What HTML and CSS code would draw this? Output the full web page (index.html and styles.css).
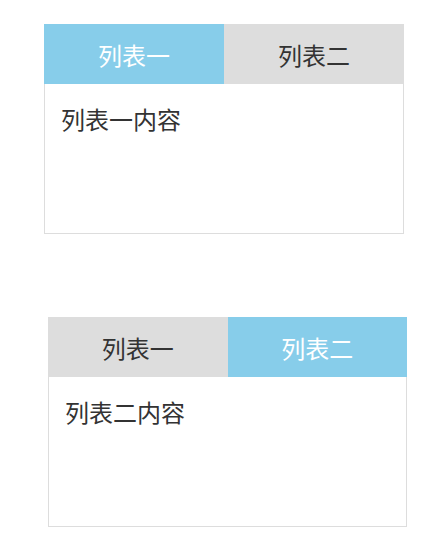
FILE: index.html
```html
<!DOCTYPE html>
<html lang="zh-CN">
<head>
  <meta charset="UTF-8">
  <meta name="viewport" content="width=device-width, initial-scale=1.0">
  <title>选项卡</title>
  <link rel="stylesheet" href="styles.css">
</head>
<body>
  <div class="tab-box" id="tabA">
    <div class="tab-head">
      <div class="tab active" data-index="0">列表一</div>
      <div class="tab" data-index="1">列表二</div>
    </div>
    <div class="tab-body">
      <div class="panel show">列表一内容</div>
      <div class="panel">列表二内容</div>
    </div>
  </div>

  <div class="tab-box second" id="tabB">
    <div class="tab-head">
      <div class="tab" data-index="0">列表一</div>
      <div class="tab active" data-index="1">列表二</div>
    </div>
    <div class="tab-body">
      <div class="panel">列表一内容</div>
      <div class="panel show">列表二内容</div>
    </div>
  </div>

  <script>
    // 点击切换选项卡
    document.querySelectorAll('.tab-box').forEach(function (box) {
      var tabs = box.querySelectorAll('.tab');
      var panels = box.querySelectorAll('.panel');
      tabs.forEach(function (tab) {
        tab.addEventListener('click', function () {
          var i = Number(tab.dataset.index);
          tabs.forEach(function (t) { t.classList.remove('active'); });
          panels.forEach(function (p) { p.classList.remove('show'); });
          tab.classList.add('active');
          panels[i].classList.add('show');
        });
      });
    });
  </script>
</body>
</html>
```
FILE: styles.css
```css
body {
  margin: 0;
  padding-top: 24px;
  font-family: "Microsoft YaHei", "Noto Sans CJK SC", sans-serif;
  background-color: #ffffff;
  color: #333333;
}
.tab-box {
  width: 360px;
  margin-left: 44px;
}
.tab-box.second {
  margin-top: 83px;
  margin-left: 48px;
  width: 359px;
}
.tab-head {
  display: flex;
  height: 60px;
}
.tab {
  flex: 1;
  display: flex;
  align-items: center;
  justify-content: center;
  background-color: #dddddd;
  font-size: 24px;
  cursor: pointer;
}
.tab.active {
  background-color: #87cdea;
  color: #ffffff;
}
.tab-body {
  height: 149px;
  border: 1px solid #dddddd;
  border-top: none;
  box-sizing: border-box;
  height: 150px;
}
.panel {
  display: none;
  padding: 17px 16px;
  font-size: 24px;
  line-height: 1.5;
}
.panel.show {
  display: block;
}
```
